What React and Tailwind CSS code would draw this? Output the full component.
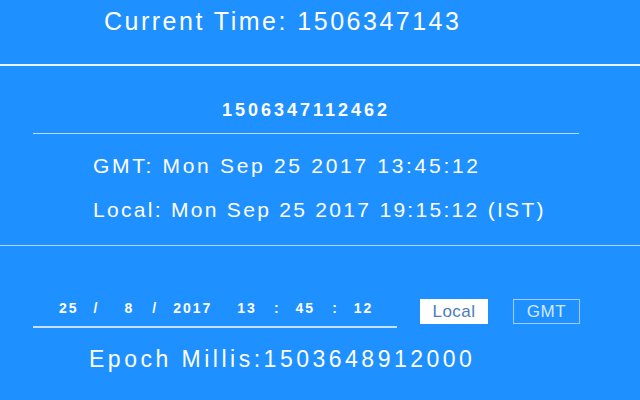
export default function App() {
  return (
    <div className="flex h-[400px] w-[640px] flex-col overflow-hidden bg-[#1e90ff] font-['Liberation_Sans',Arial,sans-serif] text-white">
      <header className="flex h-[64px] items-start pl-[104px] pt-[7px]">
        <h1 className="text-[25px] leading-[28px] tracking-[2.5px]">Current Time: 1506347143</h1>
      </header>
      <div className="h-[2px] w-full bg-[#e8f3ff]" />

      <section className="flex flex-col">
        <div className="ml-[33px] mt-[33px] w-[546px] border-b border-[#b9dcff] pb-[10px] text-center">
          <span className="text-[18px] font-bold leading-[22px] tracking-[3px]">1506347112462</span>
        </div>
        <p className="ml-[93px] mt-[20px] text-[21px] leading-[24px] tracking-[2.7px]">GMT: Mon Sep 25 2017 13:45:12</p>
        <p className="ml-[93px] mt-[20px] text-[21px] leading-[24px] tracking-[2.3px]">Local: Mon Sep 25 2017 19:15:12 (IST)</p>
      </section>

      <div className="mt-[23px] h-px w-full bg-[#b3d8ff]" />

      <section className="flex flex-col">
        <div className="mt-[53px] flex items-center">
          <div className="ml-[33px] flex h-[29px] w-[364px] items-start border-b-2 border-[#c4e1ff] pl-[26px] pt-[1px] text-[14px] font-bold leading-[16px] tracking-[2px]">
            <span>25</span>
            <span className="ml-[15px]">/</span>
            <span className="ml-[25px]">8</span>
            <span className="ml-[18px]">/</span>
            <span className="ml-[15px]">2017</span>
            <span className="ml-[25px]">13</span>
            <span className="ml-[17px]">:</span>
            <span className="ml-[15px]">45</span>
            <span className="ml-[17px]">:</span>
            <span className="ml-[15px]">12</span>
          </div>
          <button className="ml-[23px] -mt-[4px] h-[25px] w-[68px] bg-white text-[17px] leading-none tracking-[0.5px] text-[#4a7db8]">
            Local
          </button>
          <button className="ml-[25px] -mt-[4px] h-[25px] w-[67px] border border-[#9fcbff] text-[17px] leading-none tracking-[0.5px] text-[#d4e8ff]">
            GMT
          </button>
        </div>
        <p className="ml-[89px] mt-[18px] text-[23px] leading-[26px] tracking-[3.5px]">Epoch Millis:1503648912000</p>
      </section>
    </div>
  );
}
